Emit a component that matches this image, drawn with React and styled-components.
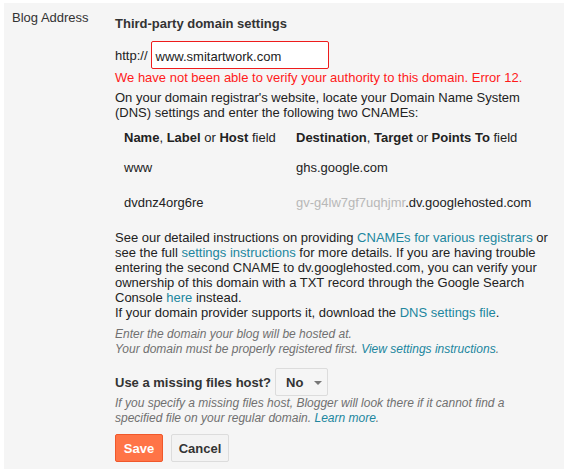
import React from "react";
import styled, { createGlobalStyle } from "styled-components";

const Global = createGlobalStyle`
  html, body { margin: 0; padding: 0; background: #ffffff; }
  body { font-family: Arial, "Liberation Sans", sans-serif; font-size: 13px; color: #222; }
`;

const Page = styled.div`
  padding: 3px 5px 6px 4px;
  background: #fff;
`;

const Panel = styled.div`
  background: #f5f5f5;
  height: 466px;
  box-sizing: border-box;
  padding: 7px 0 0 8px;
  display: grid;
  grid-template-columns: 103px 440px;
  align-items: start;
  line-height: 15px;
`;

const Label = styled.div`
  color: #333;
  font-size: 13px;
`;

const Content = styled.div`
  display: flex;
  flex-direction: column;
`;

const Heading = styled.div`
  margin-top: 6px;
  font-weight: bold;
  color: #333;
`;

const InputRow = styled.div`
  display: flex;
  align-items: center;
  margin-top: 10px;
  color: #222;
`;

const TextInput = styled.div`
  margin-left: 3px;
  width: 178px;
  height: 28px;
  box-sizing: border-box;
  border: 1px solid #ee1c1c;
  border-radius: 2px;
  background: #fff;
  padding: 0 4px;
  display: flex;
  align-items: center;
  color: #222;
  padding-top: 2px;
`;

const ErrorText = styled.div`
  margin-top: 1px;
  color: #ff1a1a;
`;

const Para = styled.p`
  margin: ${(p) => p.$mt || 0}px 0 0;
  color: #222;
`;

const Link = styled.a`
  color: #21869e;
  text-decoration: none;
`;

const Table = styled.div`
  margin-top: 10px;
  display: grid;
  grid-template-columns: 172px auto;
  padding-left: 9px;
  color: #222;
`;

const Cell = styled.div`
  height: ${(p) => p.$h}px;
  padding-top: ${(p) => p.$pt}px;
  box-sizing: border-box;
  white-space: nowrap;
`;

const Faded = styled.span`
  color: #b8b8b8;
`;

const Help = styled.div`
  margin-top: ${(p) => p.$mt}px;
  font-size: 12px;
  font-style: italic;
  color: #707070;
  line-height: ${(p) => p.$lh || 15}px;
`;

const HostRow = styled.div`
  margin-top: 11px;
  display: flex;
  align-items: center;
`;

const HostLabel = styled.div`
  font-weight: bold;
  color: #333;
`;

const Select = styled.div`
  margin-left: 4px;
  width: 53px;
  height: 28px;
  box-sizing: border-box;
  border: 1px solid #dcdcdc;
  border-radius: 2px;
  background: #f5f5f5;
  display: flex;
  align-items: center;
  padding-left: 10px;
  font-weight: bold;
  color: #333;
  gap: 11px;
`;

const Caret = styled.span`
  width: 0;
  height: 0;
  border-left: 4px solid transparent;
  border-right: 4px solid transparent;
  border-top: 4px solid #777;
  margin-top: 1px;
`;

const Buttons = styled.div`
  margin-top: 9px;
  display: flex;
  gap: 8px;
`;

const Button = styled.button`
  height: 28px;
  box-sizing: border-box;
  padding: 0;
  width: ${(p) => p.$w}px;
  font-family: Arial, "Liberation Sans", sans-serif;
  font-size: 13px;
  font-weight: bold;
  border-radius: 2px;
  border: 1px solid ${(p) => (p.$primary ? "#f0582b" : "#dcdcdc")};
  background: ${(p) => (p.$primary ? "#ff7447" : "#f3f3f3")};
  color: ${(p) => (p.$primary ? "#fff" : "#333")};
`;

export default function App() {
  return (
    <>
      <Global />
      <Page>
        <Panel>
          <Label>Blog Address</Label>
          <Content>
            <Heading>Third-party domain settings</Heading>
            <InputRow>
              <span>http://</span>
              <TextInput>www.smitartwork.com</TextInput>
            </InputRow>
            <ErrorText>
              We have not been able to verify your authority to this domain. Error 12.
            </ErrorText>
            <Para $mt={5}>
              On your domain registrar's website, locate your Domain Name System (DNS)
              settings and enter the following two CNAMEs:
            </Para>
            <Table>
              <Cell $h={30} $pt={0}>
                <b>Name</b>, <b>Label</b> or <b>Host</b> field
              </Cell>
              <Cell $h={30} $pt={0}>
                <b>Destination</b>, <b>Target</b> or <b>Points To</b> field
              </Cell>
              <Cell $h={35} $pt={0}>www</Cell>
              <Cell $h={35} $pt={0}>ghs.google.com</Cell>
              <Cell $h={35} $pt={0}>dvdnz4org6re</Cell>
              <Cell $h={35} $pt={0}>
                <Faded>gv-g4lw7gf7uqhjmr</Faded>.dv.googlehosted.com
              </Cell>
            </Table>
            <Para>
              See our detailed instructions on providing{" "}
              <Link href="#">CNAMEs for various registrars</Link> or see the full{" "}
              <Link href="#">settings instructions</Link> for more details. If you are
              having trouble entering the second CNAME to dv.googlehosted.com, you can
              verify your ownership of this domain with a TXT record through the Google
              Search Console <Link href="#">here</Link> instead.
              <br />
              If your domain provider supports it, download the{" "}
              <Link href="#">DNS settings file</Link>.
            </Para>
            <Help $mt={7}>
              Enter the domain your blog will be hosted at.
              <br />
              Your domain must be properly registered first.{" "}
              <Link href="#">View settings instructions</Link>.
            </Help>
            <HostRow>
              <HostLabel>Use a missing files host?</HostLabel>
              <Select>
                No
                <Caret />
              </Select>
            </HostRow>
            <Help $mt={0} $lh={14.5}>
              If you specify a missing files host, Blogger will look there if it cannot
              find a specified file on your regular domain.{" "}
              <Link href="#">Learn more</Link>.
            </Help>
            <Buttons>
              <Button $primary $w={48}>Save</Button>
              <Button $w={58}>Cancel</Button>
            </Buttons>
          </Content>
        </Panel>
      </Page>
    </>
  );
}
